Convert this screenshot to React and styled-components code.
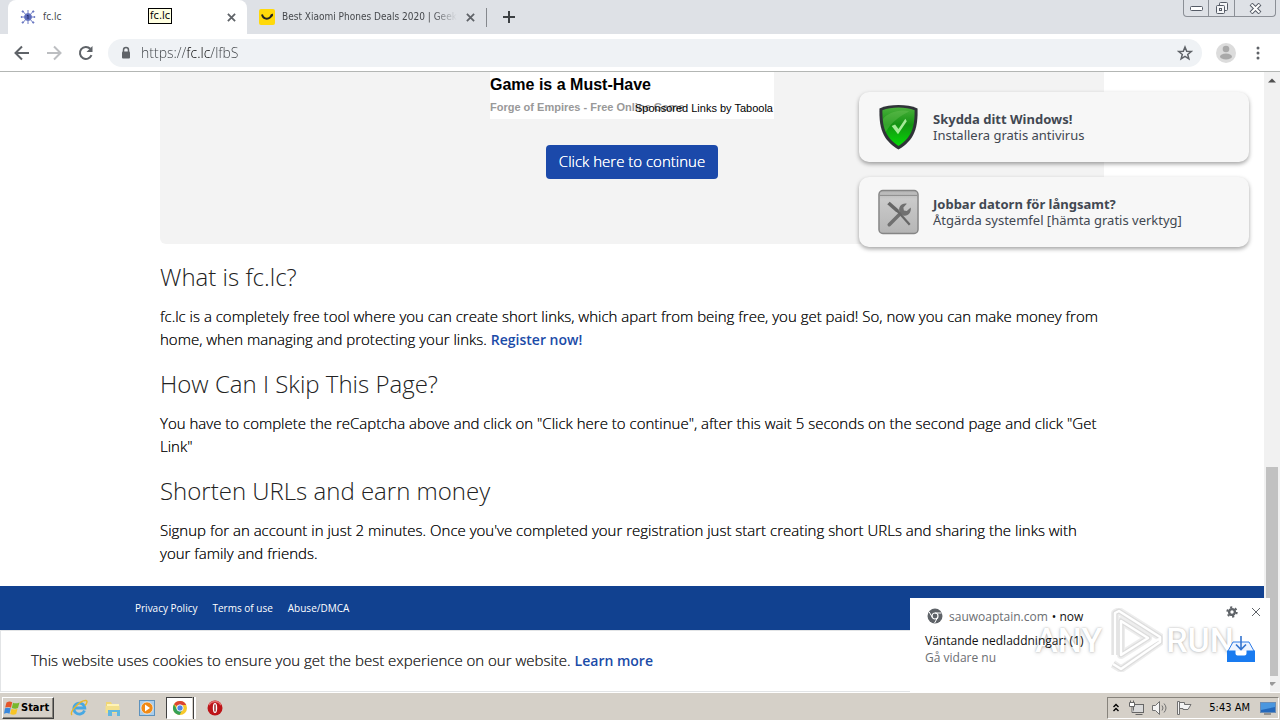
import React from "react";
import styled, { createGlobalStyle, css } from "styled-components";

const Global = createGlobalStyle`
  *, *::before, *::after { box-sizing: border-box; }
  body { margin: 0; background: #fff; font-family: "Open Sans", "Noto Sans", sans-serif; color: #2b2b2b; }
  button, input { font: inherit; border: 0; padding: 0; margin: 0; background: none; color: inherit; }
  svg { display: block; flex: none; }
  a { color: inherit; text-decoration: none; }
  h2, p { margin: 0; }
`;

const uiFont = css`font-family: "Open Sans", "DejaVu Sans", sans-serif;`;
const captionFont = css`font-family: "DejaVu Sans Condensed", "DejaVu Sans", sans-serif;`;
/* Light face with a same-place shadow, for a firmer stroke */
const firmLight = css`
  font-weight: 300;
  text-shadow: 0 0 0 currentColor;
`;

const Shell = styled.div`
  min-height: 100vh;
  display: flex;
  flex-direction: column;
`;

/* Browser chrome */
const TabStrip = styled.header`
  ${captionFont}
  position: relative;
  display: flex;
  align-items: stretch;
  height: 34px;
  padding-left: 8px;
  background: #dee1e6;
`;
const Tab = styled.div`
  position: relative;
  display: flex;
  align-items: center;
  gap: 7px;
  width: 239px;
  padding: 0 10px 0 12px;
  font-size: 10px;
  line-height: 16px;
  color: #45484c;
  background: ${(p) => (p.$active ? "#fff" : "transparent")};
  border-radius: 8px 8px 0 0;
`;
const TabTitle = styled.span`
  flex: 1;
  min-width: 0;
  overflow: hidden;
  white-space: nowrap;
  ${(p) => p.$fade && css`mask-image: linear-gradient(to right, #000 86%, transparent 100%);`}
`;
const Divider = styled.span`
  width: 1px;
  height: 19px;
  align-self: center;
  background: #85888d;
`;
const IconButton = styled.button`
  display: flex;
  align-items: center;
  justify-content: center;
  flex: none;
  width: ${(p) => p.$w || 16}px;
  height: ${(p) => p.$h || 16}px;
  color: ${(p) => p.$color || "#5f6368"};
`;
const NewTab = styled(IconButton)`
  align-self: center;
  margin-left: 14px;
`;
const Tooltip = styled.span`
  position: absolute;
  left: 148px;
  top: 8px;
  padding: 0 1px;
  font-size: 11px;
  line-height: 14px;
  color: #000;
  background: #ffffe1;
  border: 1px solid #000;
`;
const WindowControls = styled.div`
  display: flex;
  align-self: flex-start;
  height: 17px;
  margin: 0 4px 0 auto;
  border: 1px solid #8b8f96;
  border-top: 0;
  border-radius: 0 0 4px 4px;
  button + button { border-left: 1px solid #8b8f96; }
`;
const Toolbar = styled.div`
  ${uiFont}
  display: flex;
  align-items: center;
  gap: 14px;
  height: 38px;
  padding: 0 14px;
  border-bottom: 1px solid #b3b6b4;
  background: #fff;
`;
const NavButtons = styled.div`
  display: flex;
  gap: 16px;
`;
const Omnibox = styled.div`
  flex: 1;
  display: flex;
  align-items: center;
  gap: 9px;
  height: 28px;
  padding: 0 9px 0 12px;
  border-radius: 14px;
  background: #eff2f5;
`;
const UrlInput = styled.input`
  flex: 1;
  min-width: 0;
  font-size: 14px;
  font-weight: 300;
  line-height: 20px;
  outline: 0;
  color: transparent;
  background: linear-gradient(to right, #3c4044 46px, #000 46px, #000 70px, #3c4044 70px);
  background-clip: text;
`;
const ToolbarEnd = styled.div`
  display: flex;
  align-items: center;
  gap: 14px;
`;

/* Page */
const Viewport = styled.div`
  position: relative;
  flex: 1;
  display: flex;
`;
const Page = styled.div`
  flex: 1;
  min-width: 0;
  display: flex;
  flex-direction: column;
`;
const Main = styled.main`
  flex: 1;
  width: 100%;
  max-width: 944px;
  margin: 0 auto;
  padding-bottom: 21px;
`;
const CaptchaBox = styled.section`
  display: flex;
  flex-direction: column;
  align-items: center;
  gap: 26px;
  height: 172px;
  margin-bottom: 18px;
  border-radius: 0 0 6px 6px;
  background: #f3f3f3;
`;
const Ad = styled.div`
  position: relative;
  width: 284px;
  height: 47px;
  background: #fff;
  font-family: "Liberation Sans", Arial, sans-serif;
`;
const AdTitle = styled.a`
  display: block;
  padding-top: 3px;
  font-size: 16px;
  line-height: 20px;
  font-weight: 700;
  color: #000;
`;
const AdBrand = styled.p`
  padding-top: 5px;
  font-size: 11px;
  line-height: 14px;
  font-weight: 700;
  color: #999;
`;
const AdSource = styled.a`
  position: absolute;
  right: 1px;
  bottom: 4px;
  font-size: 11px;
  line-height: 14px;
  color: #000;
`;
const Continue = styled.button`
  ${firmLight}
  height: 34px;
  padding: 0 13px 2px;
  border-radius: 4px;
  background: #1b49aa;
  color: #fff;
  font-size: 15px;
  line-height: 20px;
`;
const Heading = styled.h2`
  margin-bottom: 13px;
  font-size: 24px;
  line-height: 30px;
  font-weight: 300;
  color: #222;
`;
const Text = styled.p`
  ${firmLight}
  margin-bottom: 18px;
  font-size: 15px;
  line-height: 23px;
  color: #1c1c1c;
  &:last-child { margin-bottom: 0; }
`;
const StrongLink = styled.a`
  font-size: 14px;
  font-weight: 600;
  text-shadow: none;
  color: #1b4ba8;
`;
const Footer = styled.footer`
  height: 44px;
  background: #114190;
`;
const FooterNav = styled.nav`
  display: flex;
  align-items: center;
  gap: 15px;
  height: 100%;
  max-width: 994px;
  margin: 0 auto;
  font-size: 10px;
  line-height: 14px;
  color: #fff;
`;
const CookieBar = styled.aside`
  display: flex;
  align-items: center;
  height: 62px;
  padding: 0 30px 2px;
  border: 1px solid #e2e4e6;
  border-width: 1px 0 1px 1px;
`;
const CookieText = styled.p`
  ${firmLight}
  font-size: 15px;
  line-height: 20px;
  color: #333;
`;
const Scrollbar = styled.div`
  width: 16px;
  display: flex;
  flex-direction: column;
  align-items: center;
  background: #f1f1f1;
`;
const ScrollThumb = styled.div`
  width: 12px;
  height: 209px;
  margin-top: auto;
  background: #c1c1c1;
`;

/* Page-level push cards */
const Cards = styled.div`
  position: absolute;
  top: 20px;
  right: 31px;
  width: 390px;
  display: flex;
  flex-direction: column;
  gap: 15px;
`;
const Card = styled.a`
  display: flex;
  align-items: center;
  gap: 14px;
  height: 70px;
  padding: 0 19px;
  border-radius: 10px;
  background: #f7f7f7;
  box-shadow: 0 2px 4px rgba(0, 0, 0, 0.36);
  font-family: "Noto Sans", sans-serif;
  font-size: 13px;
  line-height: 16px;
  color: #424852;
`;
const CardText = styled.span`
  display: flex;
  flex-direction: column;
`;

/* Desktop notification */
const Toast = styled.section`
  ${uiFont}
  position: absolute;
  right: 10px;
  bottom: 0;
  width: 360px;
  height: 94px;
  padding: 6px 8px 0 15px;
  display: flex;
  flex-direction: column;
  background: #fff;
  font-size: 12px;
  line-height: 17px;
  color: #111;
`;
const ToastHead = styled.div`
  position: relative;
  z-index: 1;
  display: flex;
  align-items: center;
  gap: 4px;
  height: 24px;
  padding-left: 2px;
  svg + span { margin-left: 2px; }
`;
const ToastTools = styled.span`
  display: flex;
  gap: 12px;
  margin-left: auto;
  align-self: flex-start;
`;
const ToastBody = styled.div`
  position: relative;
  z-index: 1;
  display: flex;
  align-items: center;
  justify-content: space-between;
  padding: 4px 7px 0 0;
`;
const Muted = styled.span`
  color: #6b6e72;
`;
const Watermark = styled.div`
  position: absolute;
  right: 36px;
  bottom: 20px;
  display: flex;
  align-items: center;
  gap: 3px;
  pointer-events: none;
  font-family: Roboto, "Liberation Sans", sans-serif;
  font-weight: 500;
  font-size: 34px;
  line-height: 60px;
  color: #fff;
  text-shadow: 0 0 2px rgba(0, 0, 0, 0.28), 0 1px 4px rgba(0, 0, 0, 0.16);
`;

/* Windows taskbar */
const Taskbar = styled.footer`
  ${captionFont}
  display: flex;
  align-items: center;
  height: 28px;
  padding: 2px 1px 0 2px;
  border-top: 1px solid #fff;
  background: #d5d0c8;
  font-size: 11px;
  line-height: 16px;
  color: #000;
`;
const StartButton = styled.button`
  display: flex;
  align-items: center;
  gap: 1px;
  height: 22px;
  padding: 0 4px 0 1px;
  border: 1px solid;
  border-color: #fff #404040 #404040 #fff;
  box-shadow: inset -1px -1px 0 #87837c;
  font-weight: 700;
`;
const QuickLaunch = styled.div`
  display: flex;
  align-items: center;
  gap: 4px;
  margin-left: 10px;
`;
const TaskButton = styled.button`
  display: flex;
  align-items: center;
  justify-content: center;
  width: 30px;
  height: 22px;
  ${(p) => p.$open && css`
    width: 27px;
    margin-right: 3px;
    background: #fff;
    border: 1px solid;
    border-color: #404040 #d5d0c8 #fff #404040;
    box-shadow: 1px 0 0 #404040, 3px 0 0 #fff;
  `}
`;
const Tray = styled.div`
  display: flex;
  align-items: center;
  gap: 8px;
  height: 22px;
  margin-left: auto;
  padding: 0 2px 0 4px;
  border: 1px solid;
  border-color: #87837c #fff #fff #87837c;
`;
const Clock = styled.time`
  margin: 0 2px 0 9px;
`;

const CloseX = ({ size = 10, w = 2 }) => (
  <svg width={size} height={size} viewBox="0 0 10 10" stroke="currentColor" strokeWidth={w} fill="none">
    <path d="M1 1l8 8M9 1l-8 8" />
  </svg>
);

const SiteIcon = () => (
  <svg width="16" height="16" viewBox="0 0 16 16" stroke="#6c7ac4" fill="#5a68b8">
    <path d="M1 8h14M8 1v14M3 2.500l10 11M13 2.500l-10 11" strokeWidth="1" />
    <circle cx="8" cy="8" r="3.500" />
    <circle cx="1.500" cy="8" r=".5" /><circle cx="14.500" cy="8" r=".5" />
    <circle cx="2.800" cy="2.500" r=".7" /><circle cx="13.200" cy="2.500" r=".7" />
    <circle cx="2.800" cy="13.500" r=".7" /><circle cx="13.200" cy="13.500" r=".7" />
    <path d="M8 6v4M7 7l1-1" stroke="#26316f" />
  </svg>
);
const SmileIcon = () => (
  <svg width="16" height="16" viewBox="0 0 16 16">
    <rect width="16" height="16" rx="2" fill="#ffd90a" />
    <path d="M3 5.500C4.500 11 11 11 13 5.500" fill="none" stroke="#222" strokeWidth="2" />
    <path d="M10.800 6.200L14 4.600l-.2 3z" fill="#222" />
  </svg>
);
const Arrow = ({ flip }) => (
  <svg width="16" height="16" viewBox="0 0 16 16" fill="none" stroke="currentColor" strokeWidth="2">
    {flip ? <path d="M1 8h13M8 1.500L14.500 8 8 14.500" /> : <path d="M15 8H2M8 1.500L1.500 8 8 14.500" />}
  </svg>
);
const Reload = () => (
  <svg width="16" height="16" viewBox="0 0 16 16">
    <path d="M13.500 10.200A6 6 0 1 1 12.300 3.800" fill="none" stroke="currentColor" strokeWidth="2" />
    <path d="M14.500 1v6h-6z" fill="currentColor" />
  </svg>
);
const Lock = () => (
  <svg width="12" height="14" viewBox="0 0 12 14">
    <path d="M3.500 6V4a2.500 2.500 0 0 1 5 0v2" fill="none" stroke="#5f6368" strokeWidth="1.500" />
    <rect x="2" y="5.500" width="8" height="7" rx="1" fill="#5f6368" />
  </svg>
);
const Star = () => (
  <svg width="16" height="16" viewBox="0 0 16 16" fill="none" stroke="currentColor" strokeWidth="1.500" strokeLinejoin="miter">
    <path d="M8 2l1.700 4.200 4.500.3-3.500 2.900 1.200 4.400L8 11.400l-3.900 2.400 1.200-4.400L1.800 6.500l4.500-.3z" />
  </svg>
);
const Avatar = () => (
  <svg width="20" height="20" viewBox="0 0 20 20">
    <circle cx="10" cy="10" r="10" fill="#dcdcdc" />
    <circle cx="10" cy="6" r="3.300" fill="#a9a9a9" />
    <ellipse cx="10" cy="13.500" rx="6" ry="3" fill="#a9a9a9" />
  </svg>
);
const Dots = () => (
  <svg width="4" height="14" viewBox="0 0 4 14" fill="currentColor">
    <circle cx="2" cy="2" r="1.500" /><circle cx="2" cy="7" r="1.500" /><circle cx="2" cy="12" r="1.500" />
  </svg>
);
const Shield = () => (
  <svg width="41" height="48" viewBox="0 0 42 48">
    <defs>
      <linearGradient id="sg" x1="0" y1="0" x2="0" y2="1">
        <stop offset="0" stopColor="#4ab03b" /><stop offset=".45" stopColor="#139312" /><stop offset="1" stopColor="#06d806" />
      </linearGradient>
    </defs>
    <path d="M21 1.500c7 0 14 1 19.500 3.500C41 24 38 37 21 47 4 37 1 24 1.500 5 7 2.500 14 1.500 21 1.500z" fill="#303338" />
    <path d="M21 4c6 0 12 .8 16.500 2.800C37.500 24 35 34 21 43.500 7 34 4.500 24 4.500 6.800 9 4.800 15 4 21 4z" fill="url(#sg)" />
    <path d="M5 16C9 10 22 5 32 8 24 12 14 18 8 29 6 25 5 20 5 16z" fill="#75c75e" opacity=".35" />
    <path d="M14 23l3.500-1.500 3.500 4.500 7-10.500 1.500 2.500-9 13.500z" fill="#a5ea98" />
  </svg>
);
const Tools = () => (
  <svg width="41" height="46" viewBox="0 0 42 46">
    <defs>
      <linearGradient id="tg" x1="0" y1="0" x2="0" y2="1">
        <stop offset="0" stopColor="#b4b4b4" /><stop offset=".2" stopColor="#cacaca" /><stop offset="1" stopColor="#b5b5b5" />
      </linearGradient>
    </defs>
    <rect x="1" y="1" width="40" height="44" rx="4" fill="url(#tg)" stroke="#858585" strokeWidth="1.500" />
    <path d="M2 6h38" stroke="#8a8a8a" />
    <path d="M11.500 36l13-13" stroke="#707070" strokeWidth="3.600" strokeLinecap="round" />
    <path d="M22 23c-1.500-5 2-9.500 7.500-8.500l-3.500 4 .5 3 3 .5 4-3.500c1 5-3 9.500-8 8z" fill="#707070" />
    <path d="M9.500 15l2.500-2.500 9 8 1 3.500-3.500-1z" fill="#666" />
    <path d="M20 22l12.500 14" stroke="#666" strokeWidth="2.300" />
  </svg>
);
const ChromeGrey = () => (
  <svg width="16" height="16" viewBox="0 0 16 16">
    <circle cx="8" cy="8" r="7.500" fill="#5f6368" />
    <circle cx="8" cy="8" r="3" fill="#5f6368" stroke="#fff" strokeWidth="1.200" />
    <path d="M8 5h6.500M5.400 9.500L2.200 4M10.600 9.500l-3 5.500" stroke="#fff" />
  </svg>
);
const Gear = () => (
  <svg width="12" height="12" viewBox="0 0 12 12" fill="none" stroke="#5f6368">
    <circle cx="6" cy="6" r="2.900" strokeWidth="2.400" />
    <circle cx="6" cy="6" r="4.800" strokeWidth="1.800" strokeDasharray="2.200 2.827" />
  </svg>
);
const Inbox = () => (
  <svg width="28" height="27" viewBox="0 0 28 27">
    <path d="M1 15L6 6h16l5 9" fill="#eef4ff" stroke="#2c7be8" strokeWidth="1" />
    <path d="M0 14.500h8.500v3q0 2 2 2h7q2 0 2-2v-3H28V26H0z" fill="#197bf0" />
    <path d="M14 0v13M9 8.500l5 5 5-5" fill="none" stroke="#3273cf" strokeWidth="1.600" />
  </svg>
);
const PlayMark = () => (
  <svg width="58" height="64" viewBox="0 0 58 64" fill="none" strokeLinejoin="round">
    <path d="M10 47V5l4-2 41 26v5L16 61l-8-5M16 13v34l27-17z" stroke="#000" strokeOpacity=".07" strokeWidth="8" />
    <path d="M10 47V5l4-2 41 26v5L16 61l-8-5M16 13v34l27-17z" stroke="#000" strokeOpacity=".07" strokeWidth="5" />
    <path d="M10 47V5l4-2 41 26v5L16 61l-8-5M11 51l5 4 38-24" stroke="#fff" strokeWidth="2.500" />
    <path d="M16 13v34l27-17z" stroke="#fff" strokeWidth="2.500" />
  </svg>
);
const WindowsFlag = () => (
  <svg width="16" height="16" viewBox="0 0 16 16">
    <path d="M2.500 2.500C5 1 6.500 1.200 8.200 2.300L7 7.700C5 6.500 3.500 6.800 1.200 7.500z" fill="#e4562a" />
    <path d="M9 2.700c2 1 4 .8 6.500-.2L14 8C12 9 10 8.800 7.800 8z" fill="#78b82c" />
    <path d="M1 8.300c2-.8 3.800-.8 5.700 0L5.500 13.700c-2-.9-3.500-.8-5.500 0z" fill="#3a88dc" />
    <path d="M7.500 8.800c2 .9 4 .9 6 0l-1.300 5.200c-2 1-4 .9-6 0z" fill="#f8c526" />
  </svg>
);
const IeIcon = () => (
  <svg width="18" height="18" viewBox="0 0 18 18" fill="none">
    <path d="M14.500 11.500A5.500 5.500 0 1 1 14.800 9H5" stroke="#48a8e3" strokeWidth="2.800" />
    <path d="M2 16C-1 13 10 1 16 1.500c2 .5.500 3.500-1 5" stroke="#e8b72a" strokeWidth="1.400" />
  </svg>
);
const FolderIcon = () => (
  <svg width="18" height="18" viewBox="0 0 18 18">
    <path d="M2 3h5l1 2h7v9H2z" fill="#f0d675" />
    <path d="M3 5h12v3H3z" fill="#fff3b5" />
    <path d="M1.500 7h14v7h-14z" fill="#f3e08d" />
    <path d="M4 16v-5h12v6h-3v-4h-5v4H4z" fill="#62b7df" />
  </svg>
);
const PlayerIcon = () => (
  <svg width="18" height="18" viewBox="0 0 18 18">
    <rect x="1.500" y="1.500" width="15" height="15" fill="#a9cdeb" stroke="#5d92bd" />
    <circle cx="9" cy="9" r="6" fill="#f08a16" stroke="#fff" strokeWidth=".6" />
    <path d="M7 5.500v7L12 9z" fill="#fff" />
  </svg>
);
const ChromeIcon = () => (
  <svg width="16" height="16" viewBox="0 0 16 16">
    <circle cx="8" cy="8" r="7" fill="#f8c92c" />
    <path d="M8 8L2 4.300A7 7 0 0 1 14.200 5H8z" fill="#dc4433" />
    <path d="M2 4.300A7 7 0 0 0 7.500 15L10.500 9.500 5 9.500z" fill="#36a156" />
    <circle cx="8" cy="8" r="3.200" fill="#4f86e8" stroke="#fff" strokeWidth=".9" />
  </svg>
);
const OperaIcon = () => (
  <svg width="18" height="18" viewBox="0 0 18 18">
    <circle cx="9" cy="9" r="7.500" fill="#bd1418" />
    <path d="M3 6a7 7 0 0 1 12 0" stroke="#e47070" fill="none" strokeWidth="1.500" />
    <ellipse cx="9" cy="9" rx="2.200" ry="5" fill="#fff" />
    <path d="M9 5.500v7" stroke="#831013" strokeWidth="1.300" />
  </svg>
);
const Network = () => (
  <svg width="16" height="16" viewBox="0 0 16 16" fill="#fff" stroke="#666">
    <rect x="5.500" y="4.500" width="10" height="8" fill="#d9d9d9" /><path d="M7.500 14.500h7M1.500 2.500h5v4h-5zM2.500.5v2M5.500.5v2M4 6.500v6h2" />
  </svg>
);
const Speaker = () => (
  <svg width="16" height="16" viewBox="0 0 16 16" fill="#f4f4f4" stroke="#707070">
    <path d="M.5 5.500h3l4-4v13l-4-4h-3z" /><path d="M10 5.500q2 2.500 0 5M12 3.500q4 4.500 0 9" fill="none" />
  </svg>
);
const Flag = () => (
  <svg width="16" height="16" viewBox="0 0 16 16" fill="#f4f4f4" stroke="#707070">
    <path d="M1.500 1.500h2v13h-2zM3.500 2.500h5v2h6.500l-3 5h-5v-1h-3.500z" />
  </svg>
);
const Chevrons = () => (
  <svg width="8" height="9" viewBox="0 0 8 9" fill="none" stroke="#000" strokeWidth="1.400">
    <path d="M1.500 4L4 1.500 6.500 4M1.500 8L4 5.500 6.500 8" />
  </svg>
);
const Desktop = () => (
  <svg width="16" height="16" viewBox="0 0 16 16">
    <rect x=".5" y="2.500" width="15" height="10" fill="#2468bb" stroke="#6b8db5" />
    <path d="M1 3h14v4L1 10z" fill="#4b97df" /><path d="M4 14h7" stroke="#555" />
  </svg>
);
const ScrollArrow = ({ down }) => (
  <svg width="16" height="16" viewBox="0 0 16 16">
    <path d={down ? "M4 6h8l-4 4z" : "M4 10.500h8l-4-4z"} fill={down ? "#9a9a9a" : "#505050"} />
  </svg>
);

const articles = [
  {
    title: "What is fc.lc?",
    body: "fc.lc is a completely free tool where you can create short links, which apart from being free, you get paid! So, now you can make money from home, when managing and protecting your links. ",
    link: "Register now!",
  },
  {
    title: "How Can I Skip This Page?",
    body: 'You have to complete the reCaptcha above and click on "Click here to continue", after this wait 5 seconds on the second page and click "Get Link"',
  },
  {
    title: "Shorten URLs and earn money",
    body: "Signup for an account in just 2 minutes. Once you've completed your registration just start creating short URLs and sharing the links with your family and friends.",
  },
];

export default function App() {
  return (
    <Shell>
      <Global />
      <TabStrip>
        <Tab $active>
          <SiteIcon />
          <TabTitle>fc.lc</TabTitle>
          <IconButton aria-label="Close tab" $w={12}><CloseX size={9} /></IconButton>
        </Tab>
        <Tab>
          <SmileIcon />
          <TabTitle $fade>Best Xiaomi Phones Deals 2020 | GeekBuying</TabTitle>
          <IconButton aria-label="Close tab" $w={12}><CloseX size={9} /></IconButton>
        </Tab>
        <Divider />
        <NewTab aria-label="New tab" $color="#3c4043">
          <svg width="12" height="12" viewBox="0 0 12 12" stroke="currentColor" strokeWidth="2"><path d="M6 0v12M0 6h12" /></svg>
        </NewTab>
        <WindowControls>
          <IconButton aria-label="Minimize" $w={24}>
            <svg width="13" height="5" viewBox="0 0 13 5"><rect x=".5" y=".5" width="12" height="4" rx="1" fill="#fff" stroke="#555b66" /></svg>
          </IconButton>
          <IconButton aria-label="Restore" $w={26}>
            <svg width="14" height="14" viewBox="0 0 14 14" fill="#f4f5f7" stroke="#555b66"><rect x="4.500" y="1.500" width="8" height="8" rx="1" /><rect x="1.500" y="4.500" width="8" height="8" rx="1" /><rect x="4.500" y="7.500" width="2" height="2" /></svg>
          </IconButton>
          <IconButton aria-label="Close window" $w={41}>
            <svg width="13" height="11" viewBox="0 0 13 11" fill="none"><path d="M2 1l9 9M11 1l-9 9" stroke="#555b66" strokeWidth="4" /><path d="M2.500 1.500l8 8M10.500 1.500l-8 8" stroke="#fff" strokeWidth="2" /></svg>
          </IconButton>
        </WindowControls>
        <Tooltip role="tooltip">fc.lc</Tooltip>
      </TabStrip>
      <Toolbar>
        <NavButtons>
          <IconButton aria-label="Back"><Arrow /></IconButton>
          <IconButton aria-label="Forward" $color="#bcbec1"><Arrow flip /></IconButton>
          <IconButton aria-label="Reload"><Reload /></IconButton>
        </NavButtons>
        <Omnibox>
          <Lock />
          <UrlInput aria-label="Address" defaultValue="https://fc.lc/lfbS" />
          <IconButton aria-label="Bookmark this page"><Star /></IconButton>
        </Omnibox>
        <ToolbarEnd>
          <IconButton aria-label="Profile" $w={20} $h={20}><Avatar /></IconButton>
          <IconButton aria-label="Menu"><Dots /></IconButton>
        </ToolbarEnd>
      </Toolbar>

      <Viewport>
        <Page>
          <Main>
            <CaptchaBox>
              <Ad>
                <AdTitle href="#game">Game is a Must-Have</AdTitle>
                <AdBrand>Forge of Empires - Free Online Game</AdBrand>
                <AdSource href="#taboola">Sponsored Links by Taboola</AdSource>
              </Ad>
              <Continue>Click here to continue</Continue>
            </CaptchaBox>
            {articles.map((a) => (
              <React.Fragment key={a.title}>
                <Heading>{a.title}</Heading>
                <Text>{a.body}{a.link && <StrongLink href="#register">{a.link}</StrongLink>}</Text>
              </React.Fragment>
            ))}
          </Main>
          <Footer>
            <FooterNav>
              <a href="#privacy">Privacy Policy</a>
              <a href="#terms">Terms of use</a>
              <a href="#abuse">Abuse/DMCA</a>
            </FooterNav>
          </Footer>
          <CookieBar>
            <CookieText>
              This website uses cookies to ensure you get the best experience on our website.{" "}
              <StrongLink href="#cookies">Learn more</StrongLink>
            </CookieText>
          </CookieBar>
        </Page>
        <Scrollbar>
          <ScrollArrow />
          <ScrollThumb />
          <ScrollArrow down />
        </Scrollbar>

        <Cards>
          <Card href="#antivirus">
            <Shield />
            <CardText><strong>Skydda ditt Windows!</strong><span>Installera gratis antivirus</span></CardText>
          </Card>
          <Card href="#repair">
            <Tools />
            <CardText><strong>Jobbar datorn för långsamt?</strong><span>Åtgärda systemfel [hämta gratis verktyg]</span></CardText>
          </Card>
        </Cards>

        <Toast>
          <Watermark><span>ANY</span><PlayMark /><span>RUN</span></Watermark>
          <ToastHead>
            <ChromeGrey />
            <Muted>sauwoaptain.com</Muted>
            <span>• now</span>
            <ToastTools>
              <IconButton aria-label="Notification settings" $w={12}><Gear /></IconButton>
              <IconButton aria-label="Dismiss" $w={12}><CloseX size={10} w={1} /></IconButton>
            </ToastTools>
          </ToastHead>
          <ToastBody>
            <CardText><span>Väntande nedladdningar: (1)</span><Muted>Gå vidare nu</Muted></CardText>
            <Inbox />
          </ToastBody>
        </Toast>
      </Viewport>

      <Taskbar>
        <StartButton><WindowsFlag />Start</StartButton>
        <QuickLaunch>
          <TaskButton aria-label="Internet Explorer"><IeIcon /></TaskButton>
          <TaskButton aria-label="Explorer"><FolderIcon /></TaskButton>
          <TaskButton aria-label="Media Player"><PlayerIcon /></TaskButton>
          <TaskButton aria-label="Chrome" $open><ChromeIcon /></TaskButton>
          <TaskButton aria-label="Opera"><OperaIcon /></TaskButton>
        </QuickLaunch>
        <Tray>
          <IconButton aria-label="Show hidden icons" $w={8}><Chevrons /></IconButton>
          <Network />
          <Speaker />
          <Flag />
          <Clock>5:43 AM</Clock>
          <Desktop />
        </Tray>
      </Taskbar>
    </Shell>
  );
}
